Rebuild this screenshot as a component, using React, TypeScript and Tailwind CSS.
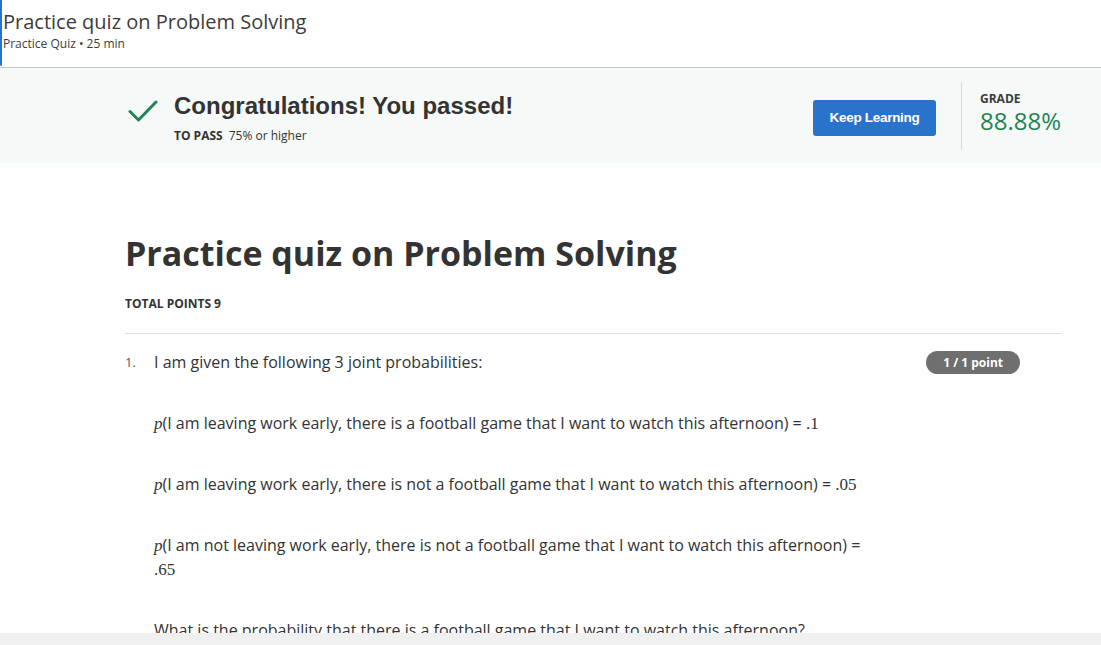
import React from "react";

const sans = "font-['Open_Sans',sans-serif]";
const arial = "font-['Liberation_Sans',Arial,sans-serif]";
const math = "font-['Liberation_Serif','DejaVu_Serif',serif]";

function Check() {
  return (
    <svg width="30" height="22" viewBox="0 0 30 22" fill="none">
      <path d="M2 11.5 L10.5 20 L28 2" stroke="#1f8354" strokeWidth="3" strokeLinecap="round" strokeLinejoin="round" />
    </svg>
  );
}

function Prob({ children, value, wrap }: { children: React.ReactNode; value: string; wrap?: boolean }) {
  return (
    <p className="text-[16px] leading-6 text-[#333]">
      <span className={`${math} italic text-[17px] leading-none`}>p</span>
      {children} ={wrap ? <br /> : " "}
      <span className={`${math} text-[17px] leading-none`}>{value}</span>
    </p>
  );
}

export default function App() {
  return (
    <div className={`${sans} h-[645px] w-full flex flex-col overflow-hidden bg-white`}>
      {/* header */}
      <header className="h-[68px] shrink-0 border-b border-[#c8c8c8] flex">
        <div className="w-[2px] h-[66px] bg-[#2a73cc] rounded-b-sm" />
        <div className="pl-[1px] pt-[8px]">
          <h1 className="text-[20px] leading-7 text-[#3c3c3c]">Practice quiz on Problem Solving</h1>
          <p className="text-[12px] leading-4 text-[#3c3c3c]">Practice Quiz • 25 min</p>
        </div>
      </header>

      {/* result banner */}
      <section className="h-[95px] shrink-0 bg-[#f5f9f8] flex items-center pl-[128px]">
        <div className="flex items-start gap-[16px] w-[685px] pt-[3px]">
          <div className="pt-[10px]">
            <Check />
          </div>
          <div>
            <h2 className={`${arial} font-bold text-[24px] leading-8 text-[#333]`}>Congratulations! You passed!</h2>
            <p className="mt-[6px] text-[12px] leading-4 text-[#333]">
              <span className="font-bold mr-[6px]">TO PASS</span>75% or higher
            </p>
          </div>
        </div>
        <button className={`${arial} w-[123px] h-[36px] rounded-[3px] bg-[#2a73cc] text-white font-bold text-[13.5px] tracking-[-0.3px] mt-[5px]`}>
          Keep Learning
        </button>
        <div className="ml-[25px] h-[68px] w-px bg-[#dcdcdc]" />
        <div className="pl-[18px] pb-[6px]">
          <div className="text-[12px] leading-4 font-bold text-[#3c3c3c]">GRADE</div>
          <div className="text-[24px] leading-7 text-[#1f8354]">88.88%</div>
        </div>
      </section>

      {/* main content */}
      <main className="flex-1 min-h-0 overflow-hidden pl-[125px] pr-[40px] pt-[67px]">
        <h1 className="text-[34px] leading-[46px] font-bold text-[#333]">Practice quiz on Problem Solving</h1>
        <div className="mt-[20px] text-[12px] leading-4 font-bold text-[#333]">TOTAL POINTS 9</div>
        <div className="mt-[21px] border-t border-[#dedede]" />
        <div className="mt-[16px] flex">
          <div className="w-[29px] text-[13px] leading-6 text-[#555]">1.</div>
          <div className="flex-1">
            <div className="flex justify-between">
              <p className="text-[16px] leading-6 text-[#333]">I am given the following 3 joint probabilities:</p>
              <span className="mr-[41px] mt-[1px] h-[23px] px-[17px] rounded-full bg-[#6f6f6f] text-white text-[12px] font-bold leading-[23px]">
                1 / 1 point
              </span>
            </div>
            <div className="mt-[37px] flex flex-col gap-[37px]">
              <Prob value=".1">(I am leaving work early, there is a football game that I want to watch this afternoon)</Prob>
              <Prob value=".05">(I am leaving work early, there is not a football game that I want to watch this afternoon)</Prob>
              <Prob value=".65" wrap>(I am not leaving work early, there is not a football game that I want to watch this afternoon)</Prob>
              <p className="text-[16px] leading-6 text-[#333]">
                What is the probability that there is a football game that I want to watch this afternoon?
              </p>
            </div>
          </div>
        </div>
      </main>

      {/* bottom scrollbar track */}
      <div className="h-[12px] shrink-0 bg-[#f0f0f0]" />
    </div>
  );
}
